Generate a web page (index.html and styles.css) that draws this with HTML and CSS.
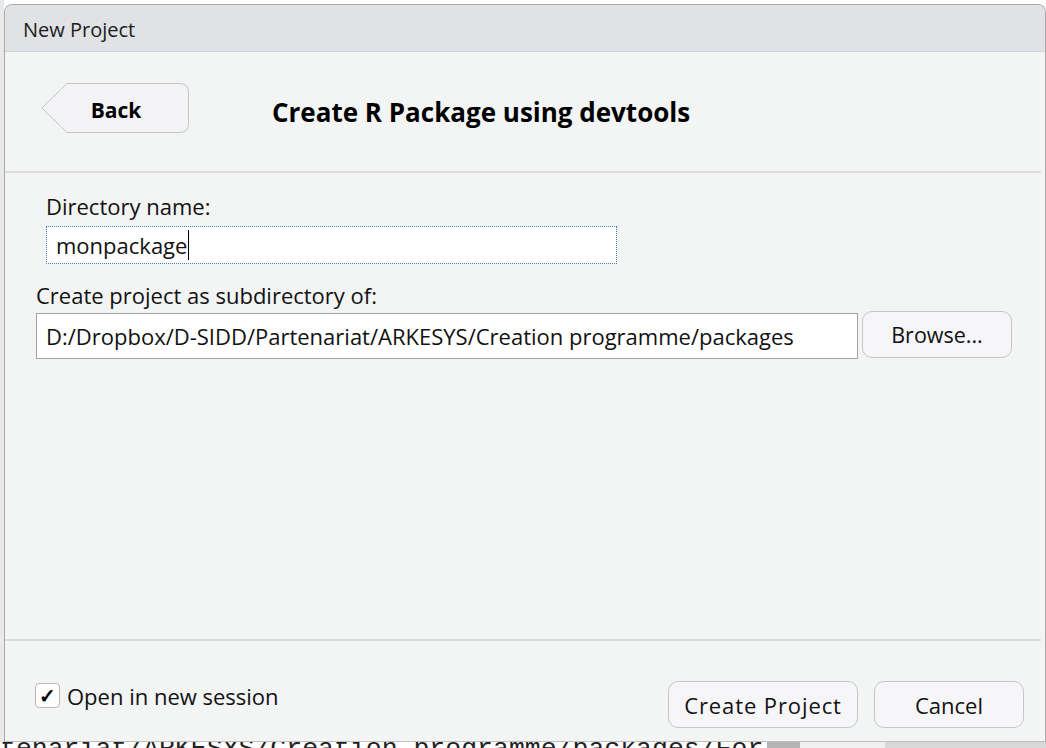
FILE: index.html
```html
<!DOCTYPE html>
<html>
<head>
<meta charset="utf-8">
<link rel="stylesheet" href="styles.css">
</head>
<body>
<div class="desktop">
  <div class="dialog">
    <div class="titlebar">New Project</div>
    <div class="header">
      <button class="back">
        <svg class="back-shape" viewBox="0 0 148 50" width="148" height="50">
          <path d="M0.8 25 L26 0.5 H139.5 A8 8 0 0 1 147.5 8.5 V41.5 A8 8 0 0 1 139.5 49.5 H26 Z" fill="#f3f3f5" stroke="#c4c4c6" stroke-width="1"/>
        </svg>
        <span class="back-label">Back</span>
      </button>
      <h1 class="heading">Create R Package using devtools</h1>
    </div>
    <div class="sep"></div>
    <div class="form">
      <div class="group indent">
        <label class="label">Directory name:</label>
        <div class="input focus">monpackage<span class="caret"></span></div>
      </div>
      <div class="group second">
        <label class="label">Create project as subdirectory of:</label>
        <div class="row">
          <div class="input wide">D:/Dropbox/D-SIDD/Partenariat/ARKESYS/Creation programme/packages</div>
          <button class="btn browse">Browse...</button>
        </div>
      </div>
    </div>
    <div class="sep"></div>
    <div class="footer">
      <label class="check"><span class="box">✓</span>Open in new session</label>
      <div class="actions">
        <button class="btn create">Create Project</button>
        <button class="btn cancel">Cancel</button>
      </div>
    </div>
  </div>
  <div class="backdrop-line">
    <span class="bd-text">tenariat/ARKESYS/Creation programme/packages/For</span>
    <span class="bd-block"></span>
    <span class="bd-light"></span>
    <span class="bd-block2"></span>
  </div>
</div>
</body>
</html>
```
FILE: styles.css
```css
html, body {
  margin: 0;
  padding: 0;
  width: 1046px;
  height: 748px;
  overflow: hidden;
  background: #ffffff;
  font-family: "Open Sans", "Noto Sans", sans-serif;
  color: #111;
}
.desktop {
  width: 1046px;
  height: 748px;
  overflow: hidden;
  background: linear-gradient(to right, #e9e9e9 0 4px, #ffffff 4px);
}
.dialog {
  margin: 4px 0 0 4px;
  width: 1042px;
  height: 738px;
  box-sizing: border-box;
  border: 1px solid #a9a9a9;
  border-bottom-color: #c0c0c0;
  border-radius: 8px 8px 0 0;
  background: #f3f4f4;
  display: flex;
  flex-direction: column;
  overflow: hidden;
}
.titlebar {
  flex: none;
  background: #e1e2e5;
  border-bottom: 1px solid #d3d4d7;
  box-sizing: border-box;
  height: 47px;
  padding-left: 18px;
  line-height: 50px;
  font-size: 20px;
  color: #1b1b1b;
}
.header {
  height: 119px;
  flex: none;
  display: flex;
  align-items: center;
  padding-left: 36px;
  box-sizing: border-box;
}
.back {
  position: relative;
  width: 148px;
  height: 50px;
  padding: 0;
  border: 0;
  background: transparent;
  font-family: inherit;
  margin-top: -7px;
}
.back-shape {
  position: absolute;
  left: 0;
  top: 0;
}
.back-label {
  position: relative;
  font-weight: 700;
  font-size: 21px;
  color: #000;
  padding-left: 2px;
  top: 2px;
}
.heading {
  margin: 0 0 0 83px;
  font-size: 26px;
  font-weight: 700;
  color: #000;
}
.sep {
  height: 2px;
  flex: none;
  background: #dcdcdc;
  margin-right: 4px;
}
.form {
  flex: 1;
  padding: 18px 0 0 31px;
  display: flex;
  flex-direction: column;
  gap: 16px;
}
.group {
  display: flex;
  flex-direction: column;
  gap: 5px;
}
.group.second {
  gap: 3px;
}
.group.indent {
  padding-left: 10px;
}
.label {
  font-size: 22px;
  line-height: 30px;
  color: #111;
}
.input {
  background: #fff;
  box-sizing: border-box;
  font-size: 22px;
  color: #111;
  display: flex;
  align-items: center;
}
.input.focus {
  width: 571px;
  height: 38px;
  border: 1px dotted #3b7bc4;
  padding-left: 9px;
}
.caret {
  display: inline-block;
  width: 1px;
  height: 30px;
  background: #000;
  margin-left: 1px;
}
.row {
  display: flex;
  align-items: flex-start;
  gap: 4px;
}
.input.wide {
  width: 822px;
  height: 46px;
  border: 1px solid #a2a2a2;
  padding-left: 9px;
}
.btn {
  box-sizing: border-box;
  background: #f6f6f8;
  border: 1px solid #c6c6c8;
  border-radius: 10px;
  font-family: inherit;
  font-size: 21.5px;
  color: #111;
  padding: 0;
}
.browse {
  width: 150px;
  height: 47px;
  margin-top: -2px;
}
.footer {
  height: 100px;
  flex: none;
  display: flex;
  align-items: flex-start;
  justify-content: space-between;
  padding: 40px 21px 0 30px;
  box-sizing: border-box;
}
.check {
  display: flex;
  align-items: center;
  gap: 7px;
  font-size: 22px;
  height: 25px;
  margin-top: 2px;
}
.box {
  width: 25px;
  height: 25px;
  box-sizing: border-box;
  border: 1px solid #b9b9b9;
  border-radius: 4px;
  background: #fff;
  display: flex;
  align-items: center;
  justify-content: center;
  font-size: 20px;
  font-weight: 700;
  line-height: 1;
  color: #000;
}
.actions {
  display: flex;
  gap: 16px;
}
.create {
  width: 190px;
  height: 47px;
  font-size: 22px;
  letter-spacing: 0.9px;
}
.cancel {
  width: 150px;
  height: 47px;
  font-size: 22px;
}
.backdrop-line {
  height: 6px;
  display: flex;
  align-items: flex-start;
  overflow: hidden;
  background: #fff;
}
.bd-text {
  font-family: "Liberation Mono", monospace;
  font-size: 26.5px;
  line-height: 26px;
  margin-top: -6px;
  width: 767px;
  flex: none;
  white-space: nowrap;
  overflow: hidden;
  color: #222;
}
.bd-block {
  width: 33px;
  height: 6px;
  background: #b4b4b4;
  flex: none;
}
.bd-light {
  width: 85px;
  height: 6px;
  background: #f0f0f0;
  flex: none;
}
.bd-block2 {
  flex: 1;
  height: 6px;
  background: #d8d8d8;
}
```
